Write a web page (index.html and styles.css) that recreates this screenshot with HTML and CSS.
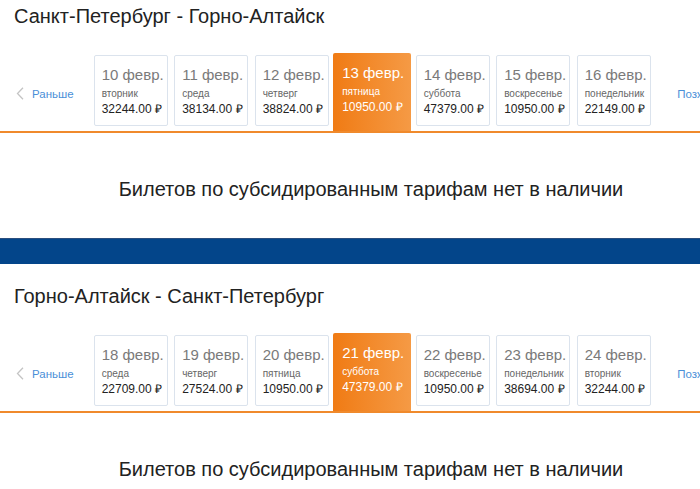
FILE: index.html
```html
<!DOCTYPE html>
<html lang="ru">
<head>
<meta charset="utf-8">
<title>Субсидированные тарифы</title>
<link rel="stylesheet" href="styles.css">
</head>
<body>
<div class="page">
  <section class="leg leg-first">
    <h2 class="route">Санкт-Петербург - Горно-Алтайск</h2>
    <div class="dates">
      <a class="nav prev" href="#"><svg class="chev" width="8" height="13" viewBox="0 0 8 13"><path d="M7 0.8 L1.5 6.5 L7 12.2" fill="none" stroke="#c4c4c4" stroke-width="1.3"/></svg><span>Раньше</span></a>
      <div class="day"><div class="date">10 февр.</div><div class="wd">вторник</div><div class="price">32244.00 ₽</div></div>
      <div class="day"><div class="date">11 февр.</div><div class="wd">среда</div><div class="price">38134.00 ₽</div></div>
      <div class="day"><div class="date">12 февр.</div><div class="wd">четверг</div><div class="price">38824.00 ₽</div></div>
      <div class="day active"><div class="date">13 февр.</div><div class="wd">пятница</div><div class="price">10950.00 ₽</div></div>
      <div class="day"><div class="date">14 февр.</div><div class="wd">суббота</div><div class="price">47379.00 ₽</div></div>
      <div class="day"><div class="date">15 февр.</div><div class="wd">воскресенье</div><div class="price">10950.00 ₽</div></div>
      <div class="day"><div class="date">16 февр.</div><div class="wd">понедельник</div><div class="price">22149.00 ₽</div></div>
      <a class="nav next" href="#">Позже</a>
    </div>
    <p class="empty">Билетов по субсидированным тарифам нет в наличии</p>
  </section>
  <div class="band"></div>
  <section class="leg">
    <h2 class="route">Горно-Алтайск - Санкт-Петербург</h2>
    <div class="dates">
      <a class="nav prev" href="#"><svg class="chev" width="8" height="13" viewBox="0 0 8 13"><path d="M7 0.8 L1.5 6.5 L7 12.2" fill="none" stroke="#c4c4c4" stroke-width="1.3"/></svg><span>Раньше</span></a>
      <div class="day"><div class="date">18 февр.</div><div class="wd">среда</div><div class="price">22709.00 ₽</div></div>
      <div class="day"><div class="date">19 февр.</div><div class="wd">четверг</div><div class="price">27524.00 ₽</div></div>
      <div class="day"><div class="date">20 февр.</div><div class="wd">пятница</div><div class="price">10950.00 ₽</div></div>
      <div class="day active"><div class="date">21 февр.</div><div class="wd">суббота</div><div class="price">47379.00 ₽</div></div>
      <div class="day"><div class="date">22 февр.</div><div class="wd">воскресенье</div><div class="price">10950.00 ₽</div></div>
      <div class="day"><div class="date">23 февр.</div><div class="wd">понедельник</div><div class="price">38694.00 ₽</div></div>
      <div class="day"><div class="date">24 февр.</div><div class="wd">вторник</div><div class="price">32244.00 ₽</div></div>
      <a class="nav next" href="#">Позже</a>
    </div>
    <p class="empty">Билетов по субсидированным тарифам нет в наличии</p>
  </section>
</div>
</body>
</html>
```
FILE: styles.css
```css
html, body {
  margin: 0;
  padding: 0;
  background: #fff;
  overflow: hidden;
}
body {
  font-family: "Liberation Sans", Arial, sans-serif;
  color: #222;
}
.page {
  width: 742px;
}
.leg {
  padding-top: 22px;
  height: 232px;
}
.leg-first {
  padding-top: 6px;
}
.route {
  margin: 0 0 0 14px;
  font-size: 20px;
  line-height: 20px;
  font-weight: normal;
  color: #222;
}
.dates {
  margin-top: 27px;
  height: 78px;
  border-bottom: 2px solid #f08a2c;
  display: flex;
  align-items: flex-start;
  gap: 6.5px;
  padding-left: 16px;
}
.nav {
  display: flex;
  align-items: center;
  gap: 8px;
  color: #4a8fd8;
  font-size: 11.5px;
  text-decoration: none;
  margin-top: 34px;
}
.prev {
  margin-right: 13.5px;
}
.next {
  margin-left: 20px;
  margin-top: 35px;
}
.chev {
  display: block;
}
.day {
  box-sizing: border-box;
  width: 74px;
  height: 71px;
  margin-top: 2px;
  border: 1px solid #dbe3ed;
  border-radius: 2px;
  padding: 10px 4px 0 7px;
  background: #fff;
  white-space: nowrap;
}
.day.active {
  width: 78px;
  height: 78px;
  margin: 0 -2px;
  padding: 11px 6px 0 9px;
  border: none;
  border-radius: 2px 2px 0 0;
  background: linear-gradient(90deg, #f07b14 0%, #f59a45 100%);
  color: #fff;
}
.date {
  font-size: 15px;
  line-height: 17px;
  color: #7a7a7a;
}
.wd {
  margin-top: 5px;
  font-size: 10px;
  line-height: 12px;
  color: #666;
}
.price {
  margin-top: 2px;
  font-size: 12px;
  line-height: 14px;
  color: #222;
}
.day.active .date,
.day.active .wd,
.day.active .price {
  color: #fff;
}
.empty {
  margin: 45px 0 0;
  text-align: center;
  font-size: 20px;
  line-height: 23px;
  color: #222;
}
.band {
  height: 26px;
  background: #03458a;
  border-top: 1px solid #2b4f7e;
  box-sizing: border-box;
}
```
